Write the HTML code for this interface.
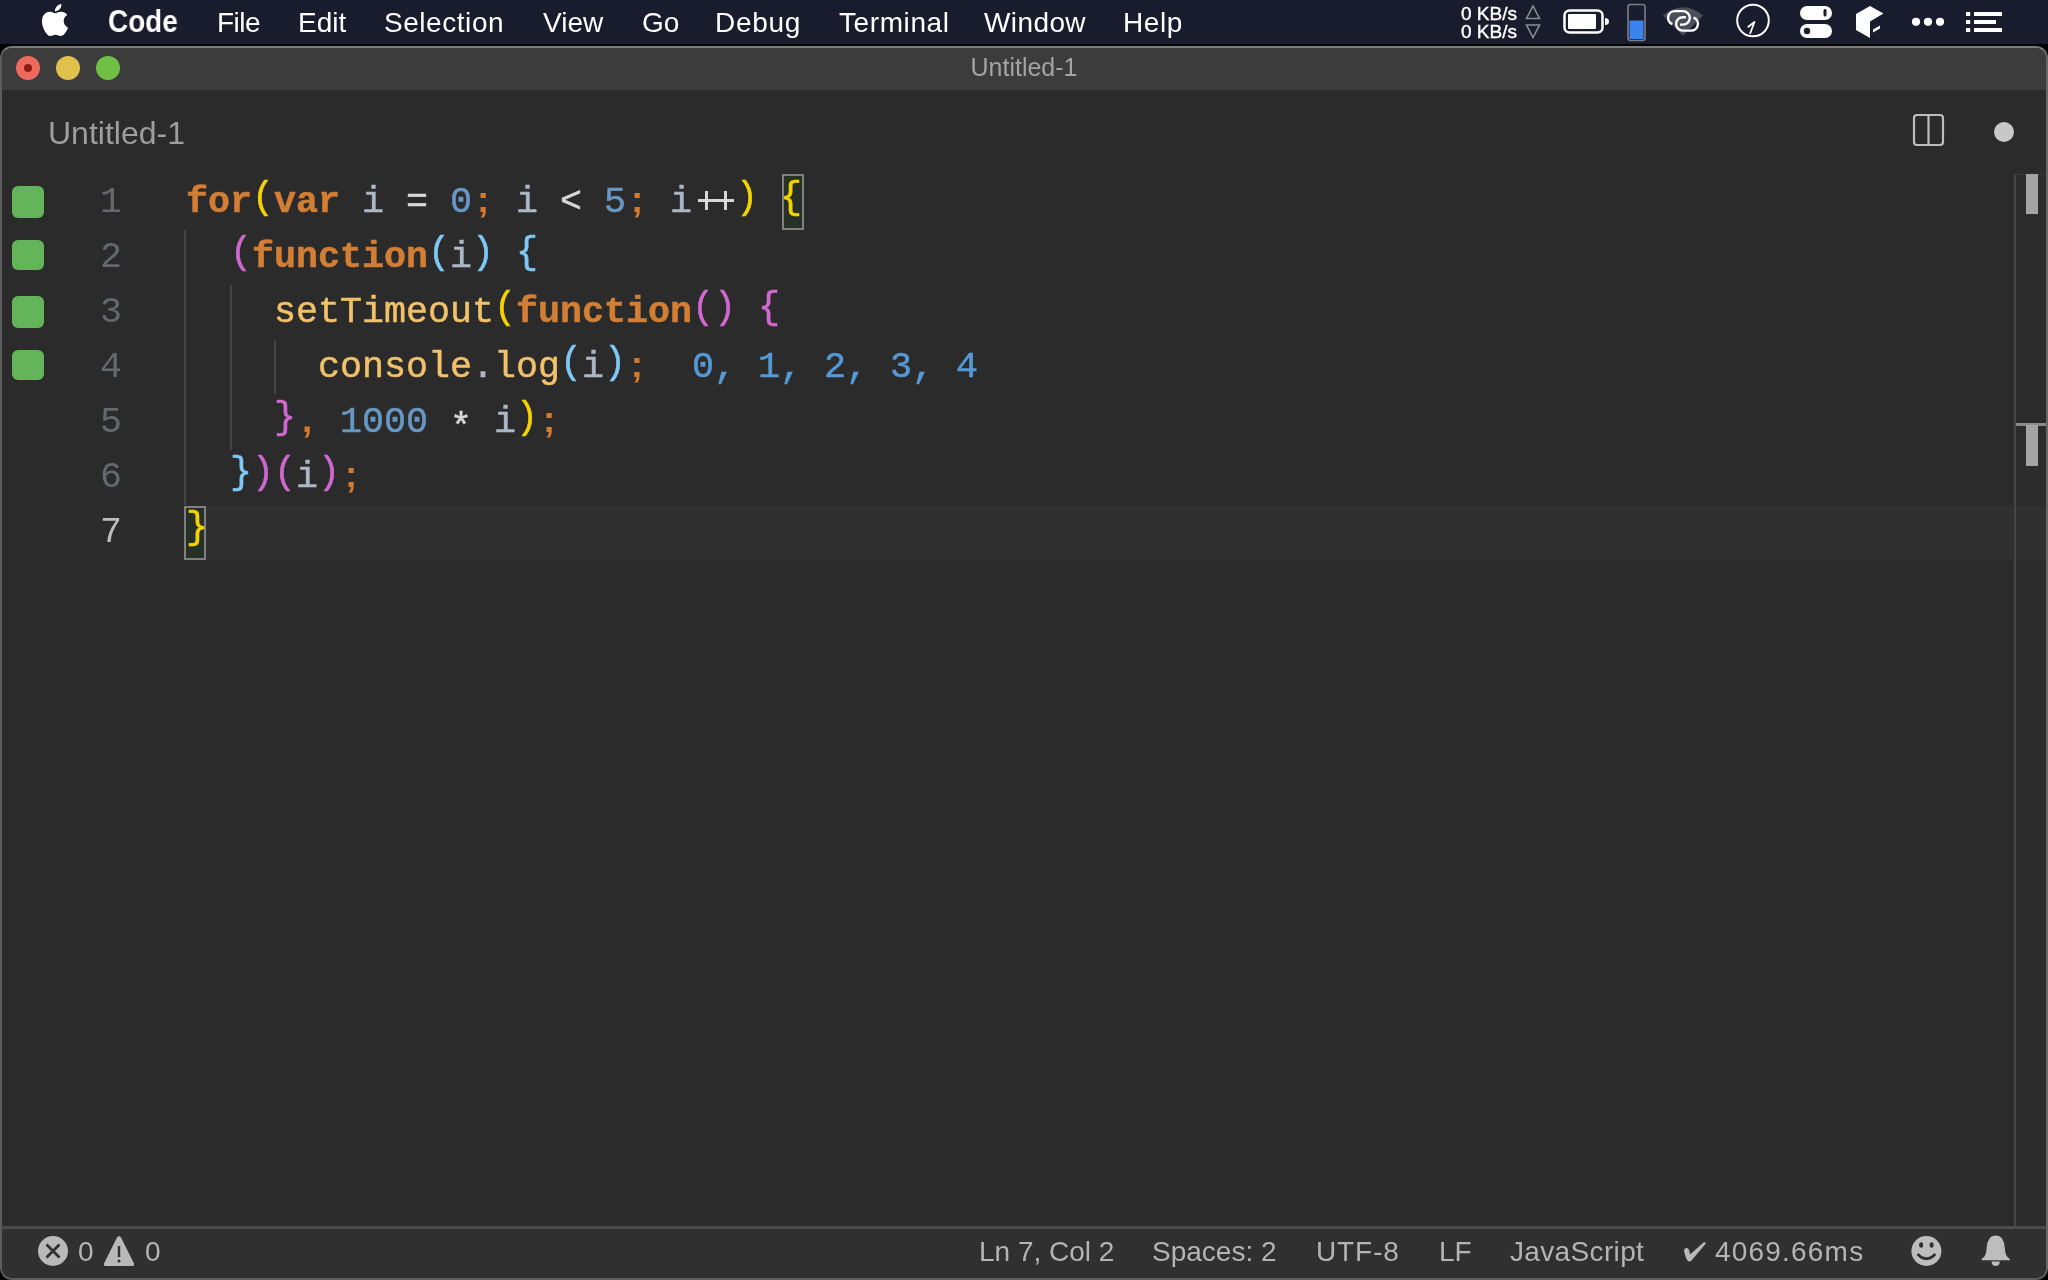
<!DOCTYPE html>
<html><head><meta charset="utf-8">
<style>
*{margin:0;padding:0;box-sizing:border-box}
html,body{width:2048px;height:1280px;overflow:hidden;background:#000}
body{position:relative;font-family:"Liberation Sans",sans-serif;-webkit-font-smoothing:antialiased}
.mi,.si,#title,#tab,.code,.lns{will-change:transform}
.abs{position:absolute}
#menubar{position:absolute;left:0;top:0;width:2048px;height:44px;background:#191c2c;color:#fff}
.mi{position:absolute;top:1px;height:44px;line-height:44px;font-size:28px;white-space:nowrap}
#win{position:absolute;left:0;top:46px;width:2048px;height:1234px;background:#2b2b2b;border:2px solid #5c5c5c;border-top-color:#7c7c7c;border-right-color:#676767;border-radius:12px;overflow:hidden}
#titlebar{position:absolute;left:0;top:0;width:2044px;height:42px;background:#3c3c3c}
.tl{position:absolute;top:8px;width:24px;height:24px;border-radius:50%}
#title{position:absolute;left:0;top:-2px;width:2044px;height:42px;line-height:42px;text-align:center;color:#a3a3a3;font-size:25px}
#tab{position:absolute;left:46px;top:67px;font-size:32px;color:#9e9e9e;line-height:36px;white-space:nowrap}
.code{position:absolute;left:184px;top:127px;-webkit-text-stroke:0.5px currentColor;font-family:"Liberation Mono",monospace;font-size:36.67px;line-height:55px;white-space:pre;color:#adb8c6}
.lns{position:absolute;left:40px;top:127px;width:80px;text-align:right;font-family:"Liberation Mono",monospace;font-size:36.67px;line-height:55px;white-space:pre;color:#65696d}
.gs{position:absolute;left:9.7px;width:32.3px;background:#64b45a;border-radius:6px}
.guide{position:absolute;width:2.4px;background:#444}
.br{display:inline-block;transform:translateY(-4.5px) scaleY(1.06)}
.sc{display:inline-block;line-height:0;width:22px;text-align:center;font-family:"Liberation Sans",sans-serif;font-weight:bold;-webkit-text-stroke:0}
.k{color:#d27e35;font-weight:bold}
.y{color:#f4d300}
.m{color:#cf69d0}
.b{color:#7fc8f5}
.n{color:#6798c4}
.o{color:#d47a30}
.f{color:#f2c16a}
.w{color:#d8d8d8}
.q{color:#5599d6}
#status{position:absolute;left:0;top:1178px;width:2044px;height:52px;background:#303030;border-top:3px solid #4c4c4c;color:#b4b4b4;font-size:28px}
.si{position:absolute;top:0;line-height:46px;white-space:nowrap}
</style></head><body>
<div id="menubar">
  <svg class="abs" style="left:39px;top:4px" width="32" height="32" viewBox="0 0 24 24"><path fill="#fff" d="M12.152 6.896c-.948 0-2.415-1.078-3.96-1.04-2.040.027-3.910 1.183-4.961 3.014-2.117 3.675-.546 9.103 1.519 12.090 1.013 1.454 2.208 3.090 3.792 3.039 1.520-.065 2.090-.987 3.935-.987 1.831 0 2.350.987 3.960.948 1.637-.026 2.676-1.480 3.676-2.948 1.156-1.688 1.636-3.325 1.662-3.415-.039-.013-3.182-1.221-3.220-4.857-.026-3.040 2.480-4.494 2.597-4.559-1.429-2.090-3.623-2.324-4.390-2.376-2-.156-3.675 1.090-4.610 1.090zM15.530 3.830c.843-1.012 1.400-2.427 1.245-3.830-1.207.052-2.662.805-3.532 1.818-.780.896-1.454 2.338-1.273 3.714 1.338.104 2.715-.688 3.559-1.701"/></svg>
  <div class="mi" style="left:108px;font-weight:bold;font-size:31px;transform:scaleX(0.9);transform-origin:0 0;top:0px">Code</div>
  <div class="mi" style="left:217px;letter-spacing:-0.5px">File</div>
  <div class="mi" style="left:298px">Edit</div>
  <div class="mi" style="left:384px;letter-spacing:0.55px">Selection</div>
  <div class="mi" style="left:543px">View</div>
  <div class="mi" style="left:642px">Go</div>
  <div class="mi" style="left:715px;letter-spacing:0.7px">Debug</div>
  <div class="mi" style="left:839px;letter-spacing:0.6px">Terminal</div>
  <div class="mi" style="left:984px;letter-spacing:0.4px">Window</div>
  <div class="mi" style="left:1123px;letter-spacing:0.6px">Help</div>
  <!-- KB/s -->
  <div class="abs" style="left:1461px;top:5px;font-size:19px;line-height:18px;color:#fff;white-space:pre;-webkit-text-stroke:0.4px #fff;will-change:transform">0 KB/s<br>0 KB/s</div>
  <svg class="abs" style="left:1524px;top:3px" width="18" height="38" viewBox="0 0 18 38">
    <path d="M9 3 L15.5 15.5 L2.5 15.5 Z" fill="none" stroke="#8a8c94" stroke-width="1.6"/>
    <path d="M2.5 22 L15.5 22 L9 34.5 Z" fill="none" stroke="#8a8c94" stroke-width="1.6"/>
  </svg>
  <!-- battery -->
  <svg class="abs" style="left:1562px;top:8px" width="52" height="30" viewBox="0 0 52 30">
    <rect x="2.5" y="2.5" width="38" height="22" rx="5" fill="none" stroke="#fff" stroke-width="2.5"/>
    <rect x="6" y="6" width="28" height="15" rx="1" fill="#fff"/>
    <path d="M43 10 Q47 10 47 13.5 Q47 17 43 17 Z" fill="#fff"/>
  </svg>
  <!-- gauge -->
  <svg class="abs" style="left:1626px;top:3px" width="22" height="40" viewBox="0 0 22 40">
    <rect x="2" y="1.5" width="17" height="36" rx="2.5" fill="none" stroke="#7b7e87" stroke-width="1.6"/>
    <rect x="3.5" y="17.5" width="14" height="18.5" fill="#3b82f0"/>
  </svg>
  <!-- wifi link -->
  <svg class="abs" style="left:1658px;top:2px" width="50" height="38" viewBox="0 0 50 38">
    <path d="M4.8 13.5 Q25 -3 45.1 13.5 L25 33.8 Z" fill="#4a4e5b"/>
    <path d="M22 22.6 L25.05 22.6 A6.75 6.75 0 0 0 25.05 9.1 L16.85 9.1 A6.75 6.75 0 0 0 14.3 22.1" fill="none" stroke="#fff" stroke-width="2.4"/>
    <path d="M27.9 15.2 L24.8 15.2 A6.7 6.7 0 0 0 24.8 28.6 L33.2 28.6 A6.7 6.7 0 0 0 35.5 15.6" fill="none" stroke="#fff" stroke-width="2.4"/>
  </svg>
  <!-- clock -->
  <svg class="abs" style="left:1733px;top:1px" width="40" height="40" viewBox="0 0 40 40">
    <circle cx="20" cy="19.5" r="15.8" fill="none" stroke="#fff" stroke-width="2"/>
    <path d="M14.7 26.3 L21.5 21 L17 32.7" fill="none" stroke="#fff" stroke-width="1.8" stroke-linejoin="round"/>
  </svg>
  <!-- toggles -->
  <svg class="abs" style="left:1798px;top:4px" width="36" height="36" viewBox="0 0 36 36">
    <rect x="2" y="2" width="32" height="14" rx="7" fill="#fff"/>
    <rect x="2" y="20" width="32" height="14" rx="7" fill="#fff"/>
    <rect x="25.5" y="5" width="3" height="7.5" rx="1.5" fill="#1a1d2d"/>
    <circle cx="9" cy="27" r="3.2" fill="#1a1d2d"/>
  </svg>
  <!-- cube -->
  <svg class="abs" style="left:1852px;top:2px" width="36" height="40" viewBox="0 0 36 40">
    <path d="M4 12 L18 4 L31.5 11.5 L18 19.5 L18 36 L4 28 Z" fill="#fff"/>
    <path d="M21 27.5 L28 23.5 L28 26.5 L21 30.5 Z" fill="#fff"/>
  </svg>
  <!-- dots -->
  <svg class="abs" style="left:1908px;top:12px" width="42" height="20" viewBox="0 0 42 20">
    <circle cx="8" cy="9.8" r="4.1" fill="#fff"/><circle cx="20" cy="9.8" r="4.1" fill="#fff"/><circle cx="32" cy="9.8" r="4.1" fill="#fff"/>
  </svg>
  <!-- list -->
  <svg class="abs" style="left:1962px;top:8px" width="44" height="28" viewBox="0 0 44 28">
    <rect x="4" y="4" width="4.2" height="4" fill="#fff"/><rect x="12" y="4" width="28" height="4" fill="#fff"/>
    <rect x="4" y="12" width="4.2" height="4" fill="#fff"/><rect x="12" y="12" width="22" height="4" fill="#fff"/>
    <rect x="4" y="20" width="4.2" height="4" fill="#fff"/><rect x="12" y="20" width="28" height="4" fill="#fff"/>
  </svg>
</div>
<div id="win">
  <div id="titlebar">
    <div class="tl" style="left:14px;background:#ee6a5e"><div class="abs" style="left:8px;top:8px;width:8px;height:8px;border-radius:50%;background:#8f1a10"></div></div>
    <div class="tl" style="left:54px;background:#e1c14c"></div>
    <div class="tl" style="left:94px;background:#70c046"></div>
    <div id="title">Untitled-1</div>
  </div>
  <div id="tab">Untitled-1</div>
  <!-- split & dot -->
  <svg class="abs" style="left:1908px;top:63px" width="36" height="36" viewBox="0 0 36 36">
    <rect x="4" y="4" width="29" height="30" rx="3" fill="none" stroke="#bdbdbd" stroke-width="2.2"/>
    <line x1="18.5" y1="4" x2="18.5" y2="34" stroke="#bdbdbd" stroke-width="2.2"/>
  </svg>
  <div class="abs" style="left:1991.5px;top:73.5px;width:20px;height:20px;border-radius:50%;background:#c8c8c8"></div>

  <!-- current line highlight -->
  <div class="abs" style="left:183px;top:458px;width:1861px;height:54px;background:#303030"></div>
  <!-- gutter squares -->
  <div class="gs" style="top:137.5px;height:32.5px"></div>
  <div class="gs" style="top:192px;height:30.25px"></div>
  <div class="gs" style="top:248px;height:31.75px"></div>
  <div class="gs" style="top:301.75px;height:30.25px"></div>
  <!-- indent guides -->
  <div class="guide" style="left:182.1px;top:182px;height:275px"></div>
  <div class="guide" style="left:227.8px;top:237px;height:165px"></div>
  <div class="guide" style="left:271.9px;top:292px;height:53.5px"></div>
  <!-- bracket boxes -->
  <div class="abs" style="left:780px;top:126px;width:22px;height:56px;border:2px solid #808080;background:#263026"></div>
  <div class="abs" style="left:182px;top:458px;width:22px;height:54px;border:2px solid #808080;background:#263026"></div>

  <div class="abs" style="left:696px;top:151px;width:36px;height:3px;background:#d8d8d8"></div>
  <div class="abs" style="left:703px;top:143px;width:3px;height:19px;background:#d8d8d8"></div>
  <div class="abs" style="left:722px;top:143px;width:3px;height:19px;background:#d8d8d8"></div>
  <div class="lns"> 1
 2
 3
 4
 5
 6
<span style="color:#bcbcbc"> 7</span></div>
  <div class="code"><span class="k">for</span><span class="y br">(</span><span class="k">var</span> i <span class="w">=</span> <span class="n">0</span><span class="o sc">;</span> i <span class="w">&lt;</span> <span class="n">5</span><span class="o sc">;</span> i<span class="w">  </span><span class="y br">)</span> <span class="y br">{</span>
  <span class="m br">(</span><span class="k">function</span><span class="b br">(</span>i<span class="b br">)</span> <span class="b br">{</span>
    <span class="f">setTimeout</span><span class="y br">(</span><span class="k">function</span><span class="m br">(</span><span class="m br">)</span> <span class="m br">{</span>
      <span class="f">console</span>.<span class="f">log</span><span class="b br">(</span>i<span class="b br">)</span><span class="o sc">;</span>  <span class="q">0, 1, 2, 3, 4</span>
    <span class="m br">}</span><span class="o sc">,</span> <span class="n">1000</span> <span class="w" style="position:relative;top:6px">*</span> i<span class="y br">)</span><span class="o sc">;</span>
  <span class="b br">}</span><span class="m br">)</span><span class="m br">(</span>i<span class="m br">)</span><span class="o sc">;</span>
<span class="y br">}</span></div>

  <!-- scrollbar / overview ruler -->
  <div class="abs" style="left:2012px;top:126px;width:2px;height:1052px;background:#464646"></div>
  <div class="abs" style="left:2012px;top:126px;width:32px;height:1px;background:#3a3a3a"></div>
  <div class="abs" style="left:2024px;top:126px;width:12px;height:40px;background:#a3a3a3"></div>
  <div class="abs" style="left:2014px;top:375px;width:30px;height:3px;background:#8a8a8a"></div>
  <div class="abs" style="left:2024px;top:377px;width:12px;height:41px;background:#a3a3a3"></div>

  <div id="status">
    <svg class="abs" style="left:35px;top:6px" width="32" height="32" viewBox="0 0 32 32">
      <circle cx="16" cy="16" r="15" fill="#b9b9b9"/>
      <path d="M9.5 9.5 L22.5 22.5 M22.5 9.5 L9.5 22.5" stroke="#303030" stroke-width="2.8"/>
    </svg>
    <div class="si" style="left:76px">0</div>
    <svg class="abs" style="left:100px;top:5px" width="34" height="34" viewBox="0 0 34 34">
      <path d="M17 2 Q18 2 19 3.5 L32 29.5 Q32.5 32 30.5 32 L3.5 32 Q1.5 32 2 29.5 L15 3.5 Q16 2 17 2 Z" fill="#b9b9b9"/>
      <path d="M17 12 L17 23" stroke="#303030" stroke-width="2.4"/>
      <circle cx="17" cy="27" r="1.6" fill="#303030"/>
    </svg>
    <div class="si" style="left:143px">0</div>
    <div class="si" style="left:977px">Ln 7, Col 2</div>
    <div class="si" style="left:1150px">Spaces: 2</div>
    <div class="si" style="left:1314px;letter-spacing:0.9px">UTF-8</div>
    <div class="si" style="left:1437px">LF</div>
    <div class="si" style="left:1508px;letter-spacing:0.35px">JavaScript</div>
    <svg class="abs" style="left:1678px;top:9px" width="30" height="28" viewBox="0 0 30 28"><path d="M4 12.5 Q4 9.5 7 10 Q9 10.5 9.5 14 L10 16.5 L23.5 4.5 Q25.5 3.8 25.8 5.5 L11.5 22.5 Q9.5 24.5 7.5 22.5 Q5.5 20 4 12.5 Z" fill="#b9b9b9"/></svg><div class="si" style="left:1713px;letter-spacing:1.2px">4069.66ms</div>
    <svg class="abs" style="left:1909px;top:5px" width="34" height="34" viewBox="0 0 34 34">
      <circle cx="15.4" cy="17" r="15" fill="#bdbdbd"/>
      <ellipse cx="10.1" cy="11" rx="2" ry="2.8" fill="#303030"/>
      <ellipse cx="20.6" cy="11" rx="2" ry="2.8" fill="#303030"/>
      <path d="M6.6 20 Q15.4 29.5 24.3 20" fill="none" stroke="#303030" stroke-width="2.8"/>
    </svg>
    <svg class="abs" style="left:1979px;top:5px" width="34" height="34" viewBox="0 0 34 34">
      <path d="M14.7 1.6 Q19 1.6 21 4.5 Q23.5 8 23.8 14 Q24.2 20.5 26.5 23 L28.8 25 L28.8 26.2 L0.7 26.2 L0.7 25 L3 23 Q5.2 20.5 5.6 14 Q6 8 8.5 4.5 Q10.5 1.6 14.7 1.6 Z" fill="#bdbdbd"/>
      <path d="M10.5 27.5 L18.9 27.5 Q18.5 32 14.7 32 Q10.9 32 10.5 27.5 Z" fill="#bdbdbd"/>
    </svg>
  </div>
</div>
</body></html>
